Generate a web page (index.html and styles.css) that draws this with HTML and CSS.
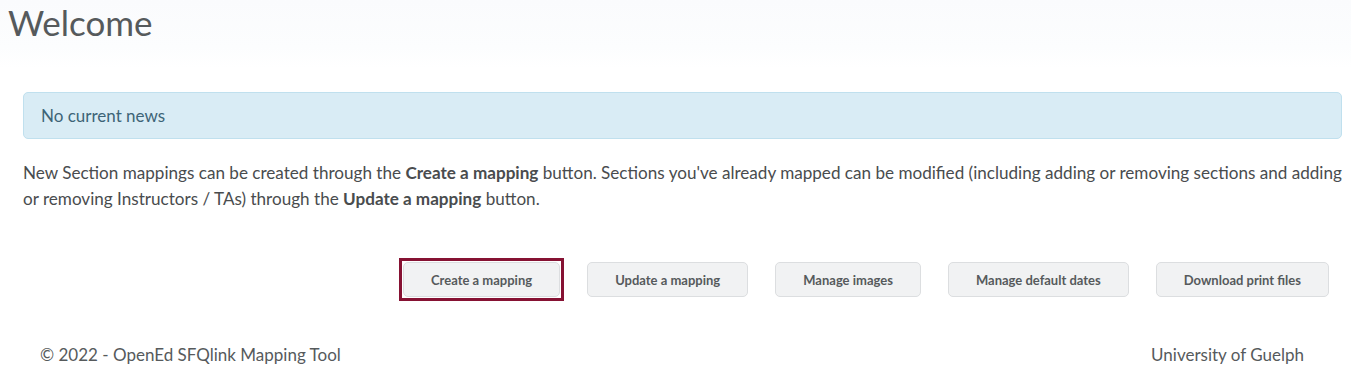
FILE: index.html
```html
<!DOCTYPE html>
<html lang="en">
<head>
	<meta charset="UTF-8">
	<title>Welcome</title>
	<link rel="stylesheet" href="styles.css">
</head>
<body>
	<h1 class="title">Welcome</h1>
	<div class="main">
		<div class="news">No current news</div>
		<p class="intro">New Section mappings can be created through the <b>Create a mapping</b> button. Sections you've already mapped can be modified (including adding or removing sections and adding or removing Instructors / TAs) through the <b>Update a mapping</b> button.</p>
		<div class="actions">
			<button class="btn focus">Create a mapping</button>
			<button class="btn">Update a mapping</button>
			<button class="btn">Manage images</button>
			<button class="btn">Manage default dates</button>
			<button class="btn">Download print files</button>
		</div>
	</div>
	<div class="footer">
		<span>&copy; 2022 - OpenEd SFQlink Mapping Tool</span>
		<span>University of Guelph</span>
	</div>
</body>
</html>
```

FILE: styles.css
```css
*{
	margin: 0;
	padding: 0;
	box-sizing: border-box;
}
body{
	background: #fff;
	font-family: Lato, "Liberation Sans", sans-serif;
	color: #494c4e;
}
.title{
	font-size: 35px;
	font-weight: 400;
	line-height: 44px;
	color: #565a5c;
	padding-left: 8px;
	height: 68px;
	background: linear-gradient(#fafbfd, #fcfdfe 70%, #fff);
}
.main{
	padding: 24px 9px 0 23px;
}
.news{
	height: 47px;
	padding: 0 17px;
	line-height: 45px;
	font-size: 17px;
	color: #3d6477;
	background: #d9ecf5;
	border: 1px solid #c0e0ee;
	border-radius: 5px;
}
.intro{
	margin-top: 21px;
	font-size: 17.1px;
	line-height: 26px;
}
.intro b{
	font-weight: 700;
}
.actions{
	display: flex;
	justify-content: flex-end;
	gap: 27px;
	margin-top: 50px;
	padding-right: 13px;
}
.btn{
	position: relative;
	height: 35px;
	padding: 0 27px;
	font-family: Lato, "Liberation Sans", sans-serif;
	font-size: 13px;
	font-weight: 700;
	color: #565a5c;
	background: #f1f2f3;
	border: 1px solid #dcdee0;
	border-radius: 5px;
	cursor: pointer;
}
.btn.focus:after{
	content: "";
	position: absolute;
	left: -5px;
	right: -5px;
	top: -5px;
	bottom: -5px;
	border: 3px solid #861233;
}
.footer{
	display: flex;
	justify-content: space-between;
	padding: 46px 47px 0 40px;
	font-size: 17px;
	line-height: 24px;
	color: #565a5c;
}
```
